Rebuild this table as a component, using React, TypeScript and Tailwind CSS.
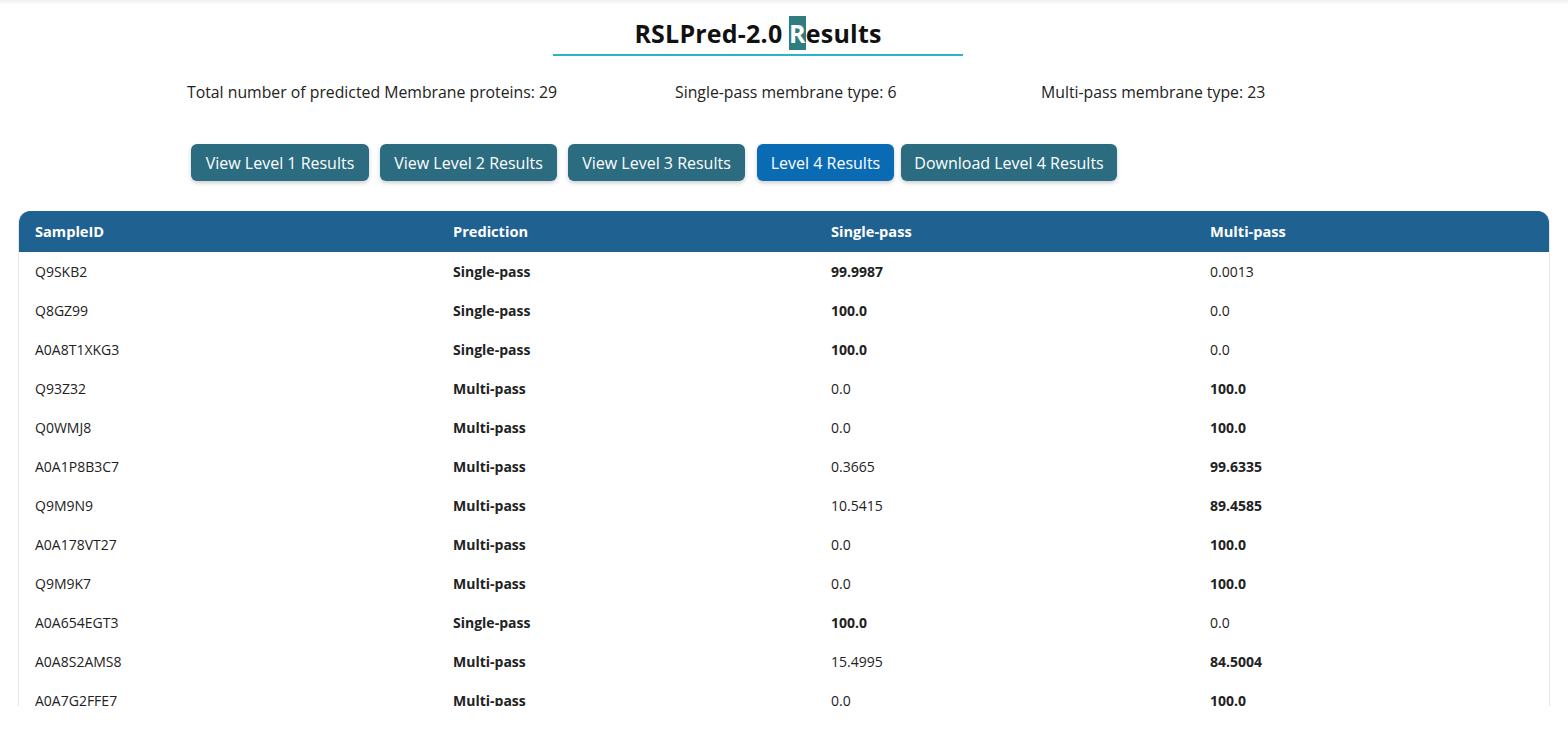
import React from "react";

const rows: [string, string, string, string][] = [
  ["Q9SKB2", "Single-pass", "99.9987", "0.0013"],
  ["Q8GZ99", "Single-pass", "100.0", "0.0"],
  ["A0A8T1XKG3", "Single-pass", "100.0", "0.0"],
  ["Q93Z32", "Multi-pass", "0.0", "100.0"],
  ["Q0WMJ8", "Multi-pass", "0.0", "100.0"],
  ["A0A1P8B3C7", "Multi-pass", "0.3665", "99.6335"],
  ["Q9M9N9", "Multi-pass", "10.5415", "89.4585"],
  ["A0A178VT27", "Multi-pass", "0.0", "100.0"],
  ["Q9M9K7", "Multi-pass", "0.0", "100.0"],
  ["A0A654EGT3", "Single-pass", "100.0", "0.0"],
  ["A0A8S2AMS8", "Multi-pass", "15.4995", "84.5004"],
  ["A0A7G2FFE7", "Multi-pass", "0.0", "100.0"],
];

const buttons = [
  { label: "View Level 1 Results", active: false, w: "w-[178px]", ml: "" },
  { label: "View Level 2 Results", active: false, w: "w-[177px]", ml: "ml-[11px]" },
  { label: "View Level 3 Results", active: false, w: "w-[177px]", ml: "ml-[11px]" },
  { label: "Level 4 Results", active: true, w: "w-[137px]", ml: "ml-[12px]" },
  { label: "Download Level 4 Results", active: false, w: "w-[216px]", ml: "ml-[7px]" },
];

export default function App() {
  return (
    <div
      className="min-h-[729px] bg-white text-[#212529]"
      style={{ fontFamily: '"Open Sans", "Noto Sans", sans-serif' }}
    >
      <div className="h-[5px] bg-gradient-to-b from-[#f0f0f0] to-white" />
      <div className="flex flex-col items-center pr-[52px]">
        <h1 className="mt-[13px] text-[25px] leading-[30px] font-bold text-[#111] tracking-[0.2px]">
          RSLPred-2.0 <span className="bg-[#2f7d7e] text-white">R</span>esults
        </h1>
        <div className="mt-[6px] h-[2px] w-[410px] bg-[#2ab4c4]" />
      </div>

      <div className="mt-[25px] flex text-[15.8px] leading-[22px] text-[#222]">
        <div className="ml-[187px] w-[488px]">Total number of predicted Membrane proteins: 29</div>
        <div className="w-[366px]">Single-pass membrane type: 6</div>
        <div>Multi-pass membrane type: 23</div>
      </div>

      <div className="mt-[41px] flex pl-[191px]">
        {buttons.map((b) => (
          <button
            key={b.label}
            className={`${b.w} ${b.ml} h-[37px] rounded-[6px] text-[16px] text-white shadow-[0_2px_4px_rgba(0,0,0,0.2)] ${
              b.active ? "bg-[#0a6bb5]" : "bg-[#2b6c80]"
            }`}
          >
            {b.label}
          </button>
        ))}
      </div>

      <div className="mx-[18px] mt-[30px] h-[495px] overflow-hidden rounded-t-[12px] border-x border-[#e6e6e6]">
        <table className="w-full border-collapse text-[14px]">
          <thead>
            <tr className="h-[41px] bg-[#1f6190] text-left text-[14.6px] text-white">
              <th className="w-[418px] pl-[16px] font-bold">SampleID</th>
              <th className="w-[378px] pl-[16px] font-bold">Prediction</th>
              <th className="w-[379px] pl-[16px] font-bold">Single-pass</th>
              <th className="pl-[16px] font-bold">Multi-pass</th>
            </tr>
          </thead>
          <tbody>
            {rows.map((r) => {
              const single = r[1] === "Single-pass";
              return (
                <tr key={r[0]} className="h-[39px] text-[#222]">
                  <td className="pl-[16px]">{r[0]}</td>
                  <td className="pl-[16px] font-bold">{r[1]}</td>
                  <td className={`pl-[16px] ${single ? "font-bold" : ""}`}>{r[2]}</td>
                  <td className={`pl-[16px] ${single ? "" : "font-bold"}`}>{r[3]}</td>
                </tr>
              );
            })}
          </tbody>
        </table>
      </div>
    </div>
  );
}
